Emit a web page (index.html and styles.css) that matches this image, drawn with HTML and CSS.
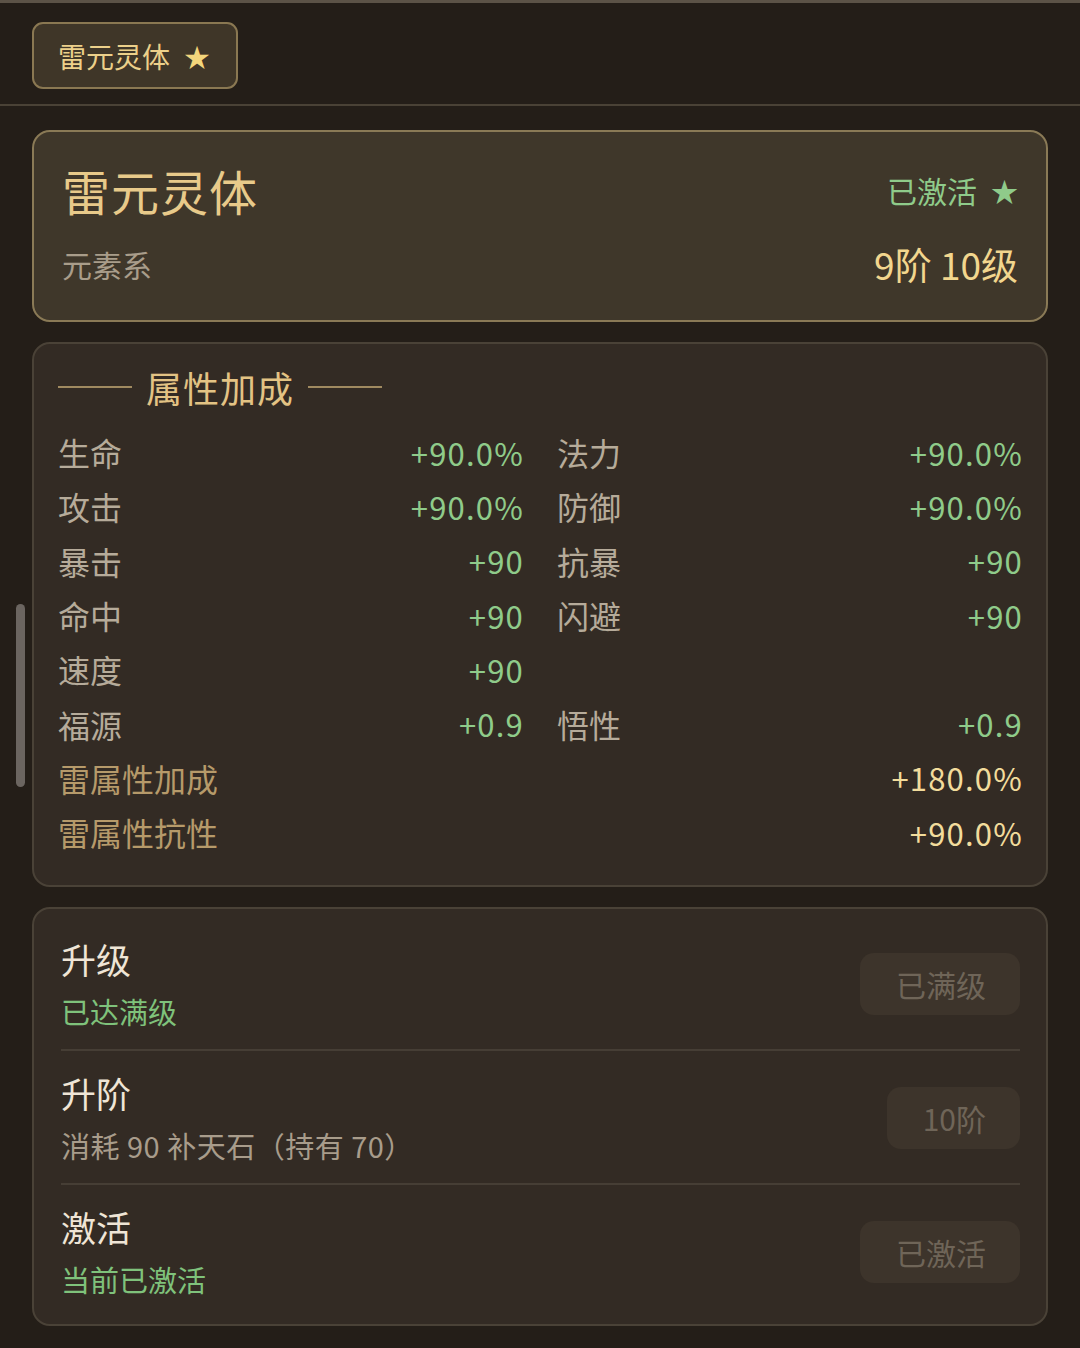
FILE: index.html
```html
<!DOCTYPE html>
<html lang="zh-CN">
<head>
<meta charset="utf-8">
<title>雷元灵体</title>
<link rel="stylesheet" href="styles.css">
</head>
<body>
<div class="page">
  <div class="topbar">
    <div class="tab">雷元灵体 <span class="tab-star">★</span></div>
  </div>
  <div class="content">
    <section class="card hero">
      <div class="hero-row">
        <div class="hero-title">雷元灵体</div>
        <div class="hero-status">已激活 <span class="status-star">★</span></div>
      </div>
      <div class="hero-row second">
        <div class="hero-sub">元素系</div>
        <div class="hero-level">9阶 10级</div>
      </div>
    </section>

    <section class="card attrs">
      <div class="attrs-head">
        <span class="head-line"></span>
        <span class="head-text">属性加成</span>
        <span class="head-line"></span>
      </div>
      <div class="attr-grid">
        <div class="attr"><span class="label">生命</span><span class="val">+90.0%</span></div>
        <div class="attr"><span class="label">法力</span><span class="val">+90.0%</span></div>
        <div class="attr"><span class="label">攻击</span><span class="val">+90.0%</span></div>
        <div class="attr"><span class="label">防御</span><span class="val">+90.0%</span></div>
        <div class="attr"><span class="label">暴击</span><span class="val">+90</span></div>
        <div class="attr"><span class="label">抗暴</span><span class="val">+90</span></div>
        <div class="attr"><span class="label">命中</span><span class="val">+90</span></div>
        <div class="attr"><span class="label">闪避</span><span class="val">+90</span></div>
        <div class="attr"><span class="label">速度</span><span class="val">+90</span></div>
        <div class="attr empty"></div>
        <div class="attr"><span class="label">福源</span><span class="val">+0.9</span></div>
        <div class="attr"><span class="label">悟性</span><span class="val">+0.9</span></div>
        <div class="attr wide"><span class="label gold">雷属性加成</span><span class="val pale">+180.0%</span></div>
        <div class="attr wide"><span class="label gold">雷属性抗性</span><span class="val pale">+90.0%</span></div>
      </div>
    </section>

    <section class="card actions">
      <div class="action">
        <div class="action-text">
          <div class="action-title">升级</div>
          <div class="action-sub green">已达满级</div>
        </div>
        <div class="btn">已满级</div>
      </div>
      <div class="action">
        <div class="action-text">
          <div class="action-title">升阶</div>
          <div class="action-sub">消耗 90 补天石（持有 70）</div>
        </div>
        <div class="btn">10阶</div>
      </div>
      <div class="action">
        <div class="action-text">
          <div class="action-title">激活</div>
          <div class="action-sub green">当前已激活</div>
        </div>
        <div class="btn">已激活</div>
      </div>
    </section>
  </div>
  <div class="scrollbar"></div>
</div>
</body>
</html>
```

FILE: styles.css
```css
* { box-sizing: border-box; }

html, body {
  margin: 0;
  padding: 0;
  background: #241e18;
}

body {
  font-family: "Noto Sans CJK SC", "Noto Sans", sans-serif;
  color: #b6ab9a;
  width: 1080px;
  height: 1348px;
  overflow: hidden;
}

.page {
  position: relative;
  height: 1348px;
}

.topbar {
  border-top: 3px solid #5c5347;
  border-bottom: 2px solid #4a4236;
  padding: 19px 32px 15px;
  height: 106px;
}

.tab {
  display: inline-flex;
  align-items: center;
  height: 67px;
  padding: 0 26px 0 24px;
  background: #3f3628;
  border: 2px solid #8a7852;
  border-radius: 11px;
  color: #ecd08a;
  font-size: 28px;
  line-height: 1;
  gap: 4px;
}

.tab-star {
  font-size: 26px;
  color: #f3d67c;
  margin-left: 10px;
}

.content {
  padding: 24px 32px 0;
  display: flex;
  flex-direction: column;
  gap: 20px;
}

.card {
  border-radius: 18px;
  border: 2px solid #4a4237;
  background: #332b24;
}

/* hero */
.hero {
  background: #3f372a;
  border-color: #8a7a56;
  padding: 28px 28px 29px 28px;
  height: 192px;
}

.hero-row {
  display: flex;
  justify-content: space-between;
  align-items: center;
  height: 60px;
}

.hero-row.second {
  height: 44px;
  margin-top: 22px;
}

.hero-title {
  font-size: 48px;
  line-height: 60px;
  color: #e8ca8a;
  letter-spacing: 1px;
}

.hero-status {
  font-size: 30px;
  color: #8fcb8a;
  display: flex;
  align-items: center;
  gap: 8px;
}

.status-star {
  font-size: 27px;
  margin-left: 6px;
}

.hero-sub {
  font-size: 30px;
  color: #a99d8a;
}

.hero-level {
  font-size: 37px;
  color: #f2d68e;
}

/* attributes */
.attrs {
  padding: 20px 23px 26px 24px;
}

.attrs-head {
  display: flex;
  align-items: center;
  height: 46px;
  gap: 14px;
}

.head-line {
  width: 74px;
  height: 2px;
  background: #a08a60;
}

.head-text {
  font-size: 36px;
  color: #e3c384;
  line-height: 46px;
  letter-spacing: 1px;
}

.attr-grid {
  margin-top: 15px;
  display: grid;
  grid-template-columns: 465px 465px;
  column-gap: 34px;
  grid-auto-rows: 54.3px;
}

.attr {
  display: flex;
  justify-content: space-between;
  align-items: center;
}

.attr.wide {
  grid-column: 1 / span 2;
}

.label {
  font-size: 32px;
  color: #b6ab9a;
}

.label.gold {
  color: #b69a6a;
}

.val {
  font-size: 31px;
  color: #8fcb8a;
  letter-spacing: 1.2px;
  margin-right: -1px;
}

.val.pale {
  color: #f2dc9c;
}

/* actions */
.actions {
  padding: 8px 26px 7px 27px;
}

.action {
  display: flex;
  justify-content: space-between;
  align-items: center;
  padding: 20px 0 18px;
  border-bottom: 2px solid #463e35;
}

.action:last-child {
  border-bottom: none;
}

.action-title {
  font-size: 35px;
  line-height: 44px;
  color: #efe5d6;
}

.action-sub {
  margin-top: 10px;
  font-size: 29px;
  line-height: 40px;
  color: #a89c8b;
  letter-spacing: 0.5px;
}

.action-sub.green {
  color: #7fc27b;
  letter-spacing: 0;
}

.btn {
  height: 62px;
  padding: 0 34px 0 36px;
  border-radius: 14px;
  background: #3d342b;
  color: #6f6558;
  font-size: 30px;
  display: flex;
  align-items: center;
}

.scrollbar {
  position: absolute;
  left: 16px;
  top: 604px;
  width: 9px;
  height: 183px;
  border-radius: 5px;
  background: #6b6560;
}
```
